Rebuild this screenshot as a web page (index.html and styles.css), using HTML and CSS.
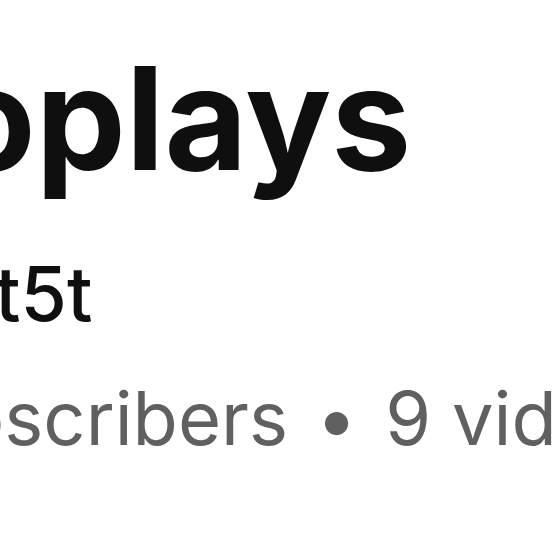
FILE: index.html
```html
<!DOCTYPE html>
<html lang="en">
<head>
<meta charset="utf-8">
<title>Channel header</title>
<link rel="stylesheet" href="styles.css">
</head>
<body>
<div class="header">
  <h1 class="name">oplays</h1>
  <div class="handle">t5t</div>
  <div class="meta">bscribers <span class="dot">•</span> 9 videos</div>
</div>
</body>
</html>
```
FILE: styles.css
```css
html, body {
  margin: 0;
  padding: 0;
  background: #ffffff;
}
body {
  width: 560px;
  height: 560px;
  overflow: hidden;
  font-family: Inter, "Liberation Sans", Arial, sans-serif;
}
.header {
  display: flex;
  flex-direction: column;
  padding-top: 46px;
  white-space: nowrap;
}
.name {
  margin: 0 0 0 -52px;
  font-size: 143px;
  line-height: 143px;
  font-weight: 700;
  color: #0f0f0f;
}
.handle {
  margin: 67px 0 0 -5px;
  font-size: 75px;
  line-height: 75px;
  font-weight: 500;
  color: #0f0f0f;
}
.meta {
  margin: 50px 0 0 -41px;
  font-size: 74px;
  line-height: 74px;
  font-weight: 400;
  color: #606060;
}
.dot {
  margin: 0 7px;
}
```
